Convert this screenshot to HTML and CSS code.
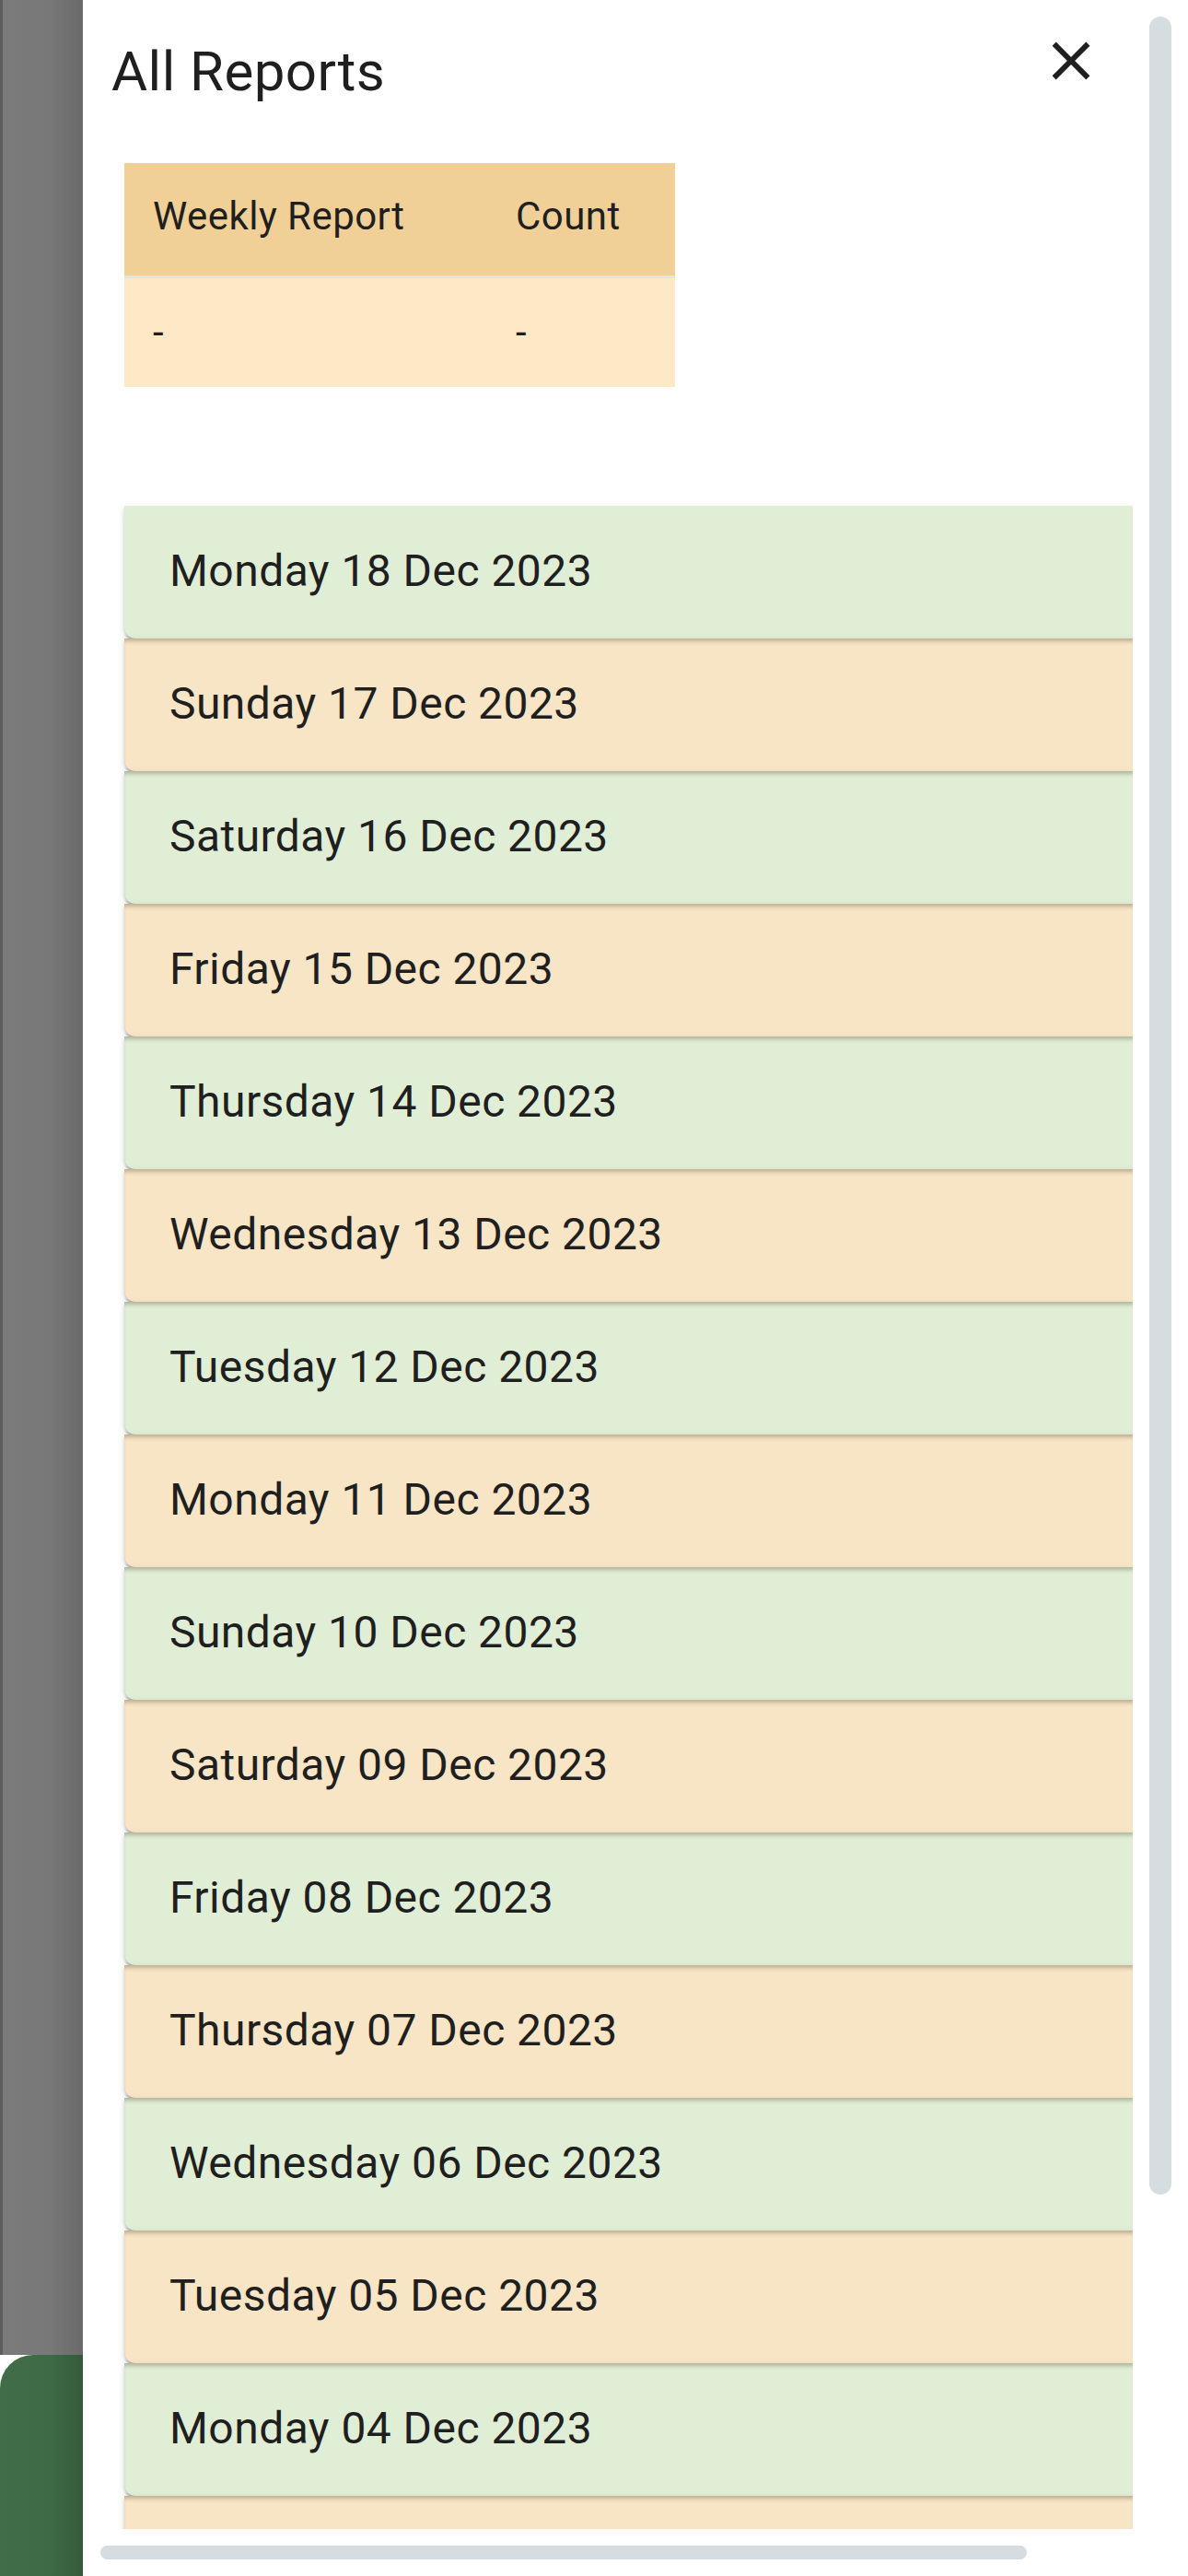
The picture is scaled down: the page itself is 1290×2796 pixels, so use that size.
FILE: index.html
```html
<!DOCTYPE html>
<html lang="en">
<head>
<meta charset="utf-8">
<title>All Reports</title>
<link rel="stylesheet" href="styles.css">
</head>
<body>
<div class="page">
  <div class="scrim">
    <div class="scrim-fill"></div>
    <div class="under-green"></div>
  </div>
  <aside class="drawer">
    <header class="drawer-head">
      <h1 class="title">All Reports</h1>
      <button class="close" aria-label="Close">
        <svg viewBox="0 0 24 24" width="70" height="70"><path d="M19 6.41L17.59 5 12 10.59 6.41 5 5 6.41 10.59 12 5 17.59 6.41 19 12 13.41 17.59 19 19 17.59 13.41 12z" fill="#1f1f1f"/></svg>
      </button>
    </header>

    <table class="summary">
      <thead>
        <tr><th class="col-a">Weekly Report</th><th class="col-b">Count</th></tr>
      </thead>
      <tbody>
        <tr><td>-</td><td>-</td></tr>
      </tbody>
    </table>

    <div class="list">
      <div class="card green">Monday 18 Dec 2023</div>
      <div class="card beige">Sunday 17 Dec 2023</div>
      <div class="card green">Saturday 16 Dec 2023</div>
      <div class="card beige">Friday 15 Dec 2023</div>
      <div class="card green">Thursday 14 Dec 2023</div>
      <div class="card beige">Wednesday 13 Dec 2023</div>
      <div class="card green">Tuesday 12 Dec 2023</div>
      <div class="card beige">Monday 11 Dec 2023</div>
      <div class="card green">Sunday 10 Dec 2023</div>
      <div class="card beige">Saturday 09 Dec 2023</div>
      <div class="card green">Friday 08 Dec 2023</div>
      <div class="card beige">Thursday 07 Dec 2023</div>
      <div class="card green">Wednesday 06 Dec 2023</div>
      <div class="card beige">Tuesday 05 Dec 2023</div>
      <div class="card green">Monday 04 Dec 2023</div>
      <div class="card beige">Sunday 03 Dec 2023</div>
    </div>
    <div class="hscroll"></div>
    <div class="vscroll"></div>
  </aside>
</div>
</body>
</html>
```

FILE: styles.css
```css
* { box-sizing: border-box; }

html, body {
  margin: 0;
  padding: 0;
}

body {
  width: 1290px;
  height: 2796px;
  overflow: hidden;
  font-family: Roboto, "Liberation Sans", Arial, sans-serif;
  color: #1f1f1f;
  background: #ffffff;
}

.page {
  display: flex;
  width: 1290px;
  height: 2796px;
}

.scrim {
  width: 90px;
  flex-shrink: 0;
  display: flex;
  flex-direction: column;
}

.scrim-fill {
  flex: 1;
  background: linear-gradient(to right, #5d5d5d 0, #5d5d5d 3px, #7b7b7b 3px, #787878 60%, #6a6a6a 100%);
}

.under-green {
  height: 240px;
  border-top-left-radius: 36px;
  background: linear-gradient(to right, #416e49 0, #3e6a46 60%, #355a3b 100%);
}

.drawer {
  position: relative;
  flex: 1;
  background: #ffffff;
  overflow: hidden;
}

.drawer-head {
  display: flex;
  justify-content: space-between;
  align-items: flex-start;
  padding: 31px 92px 0 31px;
}

.title {
  margin: 12px 0 0 0;
  font-size: 60px;
  font-weight: 400;
  line-height: 70px;
  letter-spacing: 0.45px;
  color: #1f1f1f;
}

.close {
  width: 70px;
  height: 70px;
  padding: 0;
  margin: 0;
  border: 0;
  background: transparent;
  display: block;
}

.close svg { display: block; }

.summary {
  margin: 64px 0 0 45px;
  border-collapse: collapse;
  width: 598px;
  font-size: 42px;
  letter-spacing: 0.45px;
  color: #1f1f1f;
}

.summary th,
.summary td {
  text-align: left;
  font-weight: 400;
  padding: 0 0 0 31px;
  height: 120px;
  vertical-align: middle;
}

.summary thead th {
  background: #f0d096;
  border-bottom: 3px solid #e3e3e3;
  height: 123px;
  padding-bottom: 6px;
}

.summary tbody td {
  background: #fee8c6;
}

.col-a { width: 394px; }
.col-b { width: 204px; }

.list {
  margin: 120px 0 0 30px;
  width: 1110px;
  height: 2205px;
  overflow: hidden;
  padding: 9px 0 0 15px;
  display: flex;
  flex-direction: column;
}

.card {
  flex-shrink: 0;
  width: 1200px;
  height: 144px;
  display: flex;
  align-items: center;
  padding: 0 0 4px 49px;
  font-size: 48px;
  letter-spacing: 0.45px;
  color: #1f1f1f;
  border-radius: 0 0 12px 12px;
  box-shadow: 0 6px 3px -3px rgba(0,0,0,0.2), 0 3px 3px 0 rgba(0,0,0,0.14), 0 3px 9px 0 rgba(0,0,0,0.12);
}

.card + .card {
  box-shadow: inset 0 5px 4px -2px rgba(60,50,30,0.3), 0 6px 3px -3px rgba(0,0,0,0.2), 0 3px 3px 0 rgba(0,0,0,0.14), 0 3px 9px 0 rgba(0,0,0,0.12);
}

.green { background-color: #e1eed6; }
.beige { background-color: #f7e5c5; }

.hscroll {
  margin: 18px 0 0 19px;
  width: 1006px;
  height: 15px;
  border-radius: 8px;
  background: #d5dde0;
}

.vscroll {
  position: absolute;
  top: 18px;
  right: 18px;
  width: 24px;
  height: 2364px;
  border-radius: 12px;
  background: #d5dde0;
}
```
